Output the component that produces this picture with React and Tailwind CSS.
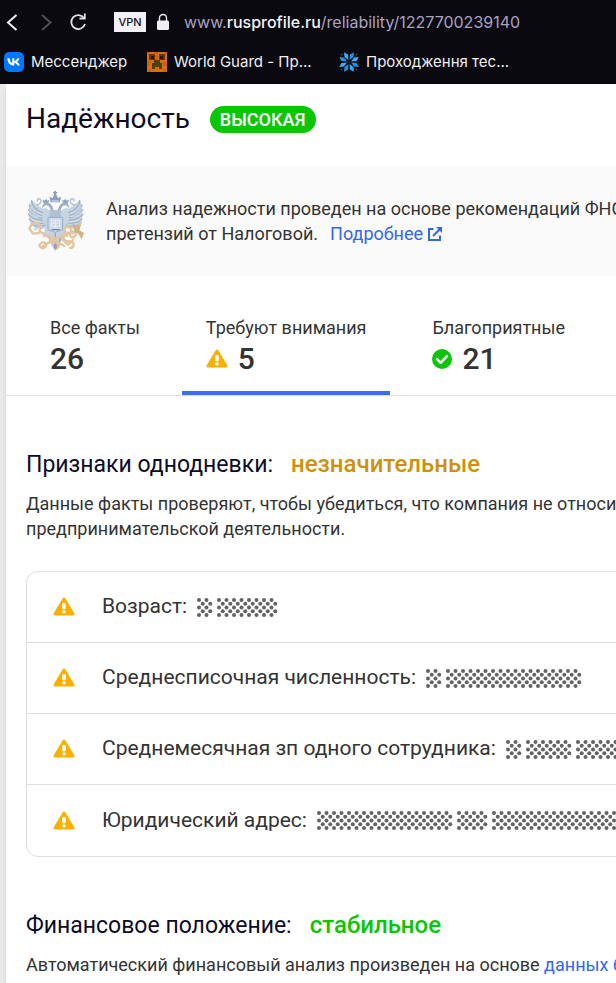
import { useState } from 'react'

const facts = [
  { id: 'age', label: 'Возраст:', words: [2, 8] },
  { id: 'staff', label: 'Среднесписочная численность:', words: [2, 18] },
  { id: 'salary', label: 'Среднемесячная зп одного сотрудника:', words: [2, 6, 8] },
  { id: 'address', label: 'Юридический адрес:', words: [18, 4, 20] },
]

const tabs = [
  { id: 'all', label: 'Все факты', count: 26 },
  { id: 'attention', label: 'Требуют внимания', count: 5, icon: WarningIcon },
  { id: 'good', label: 'Благоприятные', count: 21, icon: CheckIcon },
]

const bookmarks = [
  { id: 'vk', title: 'Мессенджер', icon: VkIcon, width: 'w-24' },
  { id: 'guard', title: 'World Guard - Пр...', icon: PumpkinIcon, width: 'w-[145px]' },
  { id: 'tests', title: 'Проходження тес...', icon: SnowflakeIcon, width: 'w-[145px]' },
]

function WarningIcon() {
  return (
    <svg width="22" height="20" viewBox="0 0 22 20" className="shrink-0" aria-hidden="true">
      <path d="M11 2 L20 17 H2 Z" fill="#f9b000" stroke="#f9b000" strokeWidth="3" strokeLinejoin="round" />
      <rect x="9.2" y="6" width="3.6" height="6.5" rx="1.4" fill="#fff" />
      <rect x="9.2" y="13.5" width="3.6" height="3" rx="1.4" fill="#fff" />
    </svg>
  )
}

function CheckIcon() {
  return (
    <svg width="20" height="20" viewBox="0 0 20 20" className="shrink-0" aria-hidden="true">
      <circle cx="10" cy="10" r="10" fill="#0bc507" />
      <path d="M5 10.2 L8.6 13.8 L15 7.2" fill="none" stroke="#fff" strokeWidth="2.6" strokeLinecap="round" strokeLinejoin="round" />
    </svg>
  )
}

function VkIcon() {
  return (
    <svg width="20" height="20" viewBox="0 0 20 20" className="shrink-0" aria-hidden="true">
      <rect width="20" height="20" rx="5" fill="#0077ff" />
      <path d="M3.4 6.3 H5.7 C5.8 9.4 7.1 10.8 8.2 11 V6.3 H10.3 V9 C11.6 8.8 12.8 7.6 13.3 6.3 H15.4 C15.1 8 13.9 9.3 13 9.9 C13.9 10.4 15.3 11.5 15.9 13.6 H13.6 C13.1 12.2 12 11.1 10.3 10.9 V13.6 H10 C6 13.6 3.5 11 3.4 6.3 Z" fill="#fff" />
    </svg>
  )
}

function PumpkinIcon() {
  return (
    <svg width="20" height="20" viewBox="0 0 20 20" shapeRendering="crispEdges" className="shrink-0" aria-hidden="true">
      <rect width="20" height="20" fill="#d9700f" />
      <path d="M0 0h3v2H0z M7 0h5v2H7z M17 0h3v2h-3z M0 9h3v5H0z M8 3h3v5H8z M16 10h4v4h-4z M1 17h3v3H1z M16 17h3v3h-3z" fill="#c9650c" />
      <path d="M2 2h6v6H2z M12 2h6v6h-6z" fill="#6b3408" />
      <path d="M4 4h3v3H4z M13 4h3v3h-3z" fill="#2e1503" />
      <path d="M7 8h6v3h2v6h-3v-2H8v2H5v-6h2z" fill="#5a3b0b" />
      <path d="M8 10h4v4H8z" fill="#3f4a10" />
    </svg>
  )
}

function SnowflakeIcon() {
  return (
    <svg width="20" height="20" viewBox="-10 -10 20 20" className="shrink-0" aria-hidden="true">
      {[0, 90, 180, 270].map((angle) => (
        <g key={angle} transform={`rotate(${angle})`}>
          <path d="M-0.6 -2 L-4.4 -5 L-5 -9.8 L-0.9 -7.6 Z" fill="#38b0fa" />
          <path d="M0.6 -2 L4.4 -5 L5 -9.8 L0.9 -7.6 Z" fill="#1c93ea" />
          <circle cx="7.5" cy="-7.5" r="1" fill="#1d4c74" />
        </g>
      ))}
      <circle r="1" fill="#17324a" />
    </svg>
  )
}

function ExternalIcon() {
  return (
    <svg width="16" height="16" viewBox="0 0 16 16" fill="none" stroke="#3268f0" strokeWidth="2" aria-hidden="true">
      <path d="M6.5 3 H2 V14 H13 V9.5" />
      <path d="M6 10 L13.5 2.5" />
      <path d="M9 1 H15 V7 Z" fill="#3268f0" stroke="none" />
    </svg>
  )
}

// Double-headed eagle over crossed gold keys
function Emblem() {
  const wing = (
    <>
      <path d="M96 82 C86 70 78 64 66 68 C54 58 40 48 33 41 C26 58 24 82 28 104 C34 124 52 130 68 128 L92 122 Z" fill="#c3d0df" />
      <g fill="none" stroke="#93a9c1" strokeWidth="4" strokeLinecap="round">
        <path d="M34 44 C34 60 44 70 66 80" />
        <path d="M27 57 C30 72 42 80 64 88" />
        <path d="M25 71 C29 84 42 90 64 96" />
        <path d="M25 85 C30 97 44 101 66 104" />
        <path d="M27 99 C34 110 48 112 68 112" />
        <path d="M34 112 C42 122 58 122 74 118" />
      </g>
      <g fill="none" stroke="#e4ebf3" strokeWidth="2" strokeLinecap="round">
        <path d="M30 62 C34 74 44 78 62 84" />
        <path d="M28 78 C34 88 46 92 62 92" />
        <path d="M29 93 C36 104 48 106 66 108" />
      </g>
      <path d="M92 90 C94 72 88 60 80 58 C74 56 70 62 65 66 C67 52 74 46 84 50 C96 54 102 72 101 90 Z" fill="#91a7c0" />
      <path d="M69 50 L66 41 L73 44 L77 38 L81 44 L87 41 L84 50 Z" fill="#7f96b2" />
      <path d="M48 57 C58 56 63 51 62 43 C58 35 49 38 51 46" fill="none" stroke="#a5b6ca" strokeWidth="4" />
    </>
  )
  return (
    <svg viewBox="17 12 186 186" className="size-[62px] shrink-0 opacity-90" role="img" aria-label="Эмблема ФНС">
      {wing}
      <g transform="matrix(-1 0 0 1 212 0)">{wing}</g>
      <path d="M91 49 L87 33 L97 36 L101 26 V21 H98 V18 H102 V14 H107 V18 H111 V21 H108 V26 L113 36 L123 33 L118 49 Z" fill="#7f97b5" />
      <path d="M94 45 H116" stroke="#dce5ef" strokeWidth="3" />
      <path d="M88 72 H122 V96 H88 Z" fill="#a9bbcf" />
      <path d="M78 118 L66 154 L82 152 L93 177 L105 196 L118 177 L129 152 L144 154 L132 118 Z" fill="#c3cfdd" />
      <path d="M87 150 L97 174 M123 150 L113 174 M105 140 V188" stroke="#899fb9" strokeWidth="4" />
      <path d="M83 94 H127 V131 C119 135 111 135 105 140 C99 135 91 135 83 131 Z" fill="#c7d5e6" stroke="#8fa8c4" strokeWidth="3" />
      <path d="M93 102 H118 V122 H93 Z M105 102 V126 M97 111 H114" fill="none" stroke="#e9f0f7" strokeWidth="3" />
      <path d="M94 131 H118" stroke="#627f9f" strokeWidth="4" />
      <g fill="none" stroke="#e0c194" strokeWidth="7" strokeLinecap="round" strokeLinejoin="round">
        <path d="M35 113 L52 111 L62 123 L56 141 L38 143 L27 128 Z" />
        <path d="M60 137 L84 153 L132 180" />
        <path d="M181 112 L164 138 L106 157 L64 184" />
        <circle cx="143" cy="131" r="10" />
        <circle cx="157" cy="145" r="9" />
        <path d="M132 144 C124 160 134 168 151 166 C164 170 162 186 150 186" />
        <path d="M63 171 C76 164 84 180 70 186 C60 188 56 180 58 175" />
        <path d="M97 155 C84 160 88 170 102 170 C120 172 119 188 105 187" />
        <path d="M128 162 L143 176 L158 162" />
      </g>
      <path d="M156 111 L169 121 L182 116 L177 133 L191 141 L184 160 L174 143 L163 139 Z" fill="#ccab79" />
      <path d="M43 122 L52 122 L51 133 H41 Z" fill="#c9d3dc" />
      <path d="M99 178 L105 172 L111 178 L108 190 H102 Z" fill="#9b8db2" />
    </svg>
  )
}

// Hidden values are drawn as a dotted stipple, one block per word
function Stipple({ cells }) {
  const dots = []
  for (let col = 0; col < cells * 2; col++) {
    for (let row = col % 2; row < 5; row += 2) {
      dots.push(<circle key={`${col}-${row}`} cx={2 + col * 3.75} cy={2 + row * 3.75} r="2" />)
    }
  }
  return (
    <svg width={Math.ceil(cells * 7.5)} height="19" fill="#636363" className="shrink-0 overflow-visible" aria-hidden="true">
      {dots}
    </svg>
  )
}

function BrowserBar() {
  return (
    <header className="bg-[#09090f] h-21 overflow-hidden whitespace-nowrap font-[Inter,sans-serif]">
      <div className="flex items-center h-11 pl-1">
        <button type="button" aria-label="Назад" className="w-4">
          <svg width="16" height="20" viewBox="0 0 16 20" fill="none" stroke="#f0eff5" strokeWidth="2">
            <path d="M12.5 3 L4 10.5 L12.5 18" />
          </svg>
        </button>
        <button type="button" aria-label="Вперёд" className="ml-5 w-4">
          <svg width="16" height="20" viewBox="0 0 16 20" fill="none" stroke="#504f57" strokeWidth="2">
            <path d="M2 3 L10.5 10.5 L2 18" />
          </svg>
        </button>
        <button type="button" aria-label="Обновить" className="ml-3 w-5">
          <svg width="20" height="20" viewBox="0 0 20 20" fill="none" stroke="#e3e2e8" strokeWidth="1.8">
            <path d="M16 6 A7 7 0 1 0 17 12" />
            <path d="M16.8 1.5 V6.5 H11.5" />
          </svg>
        </button>
        <span className="ml-[26px] w-8 h-5 flex items-center justify-center bg-[#f3f1f7] text-[11px] font-medium text-[#111118]">VPN</span>
        <svg width="12" height="18" viewBox="0 0 12 18" className="ml-[11px] shrink-0" aria-hidden="true">
          <path d="M2.5 8 V5 A3.5 3.5 0 0 1 9.5 5 V8" fill="none" stroke="#f0eff5" strokeWidth="1.4" />
          <rect y="7.5" width="12" height="9.5" rx="1.5" fill="#f0eff5" />
        </svg>
        <p className="ml-[15px] text-base text-[#aba2c2]">
          www.<span className="font-medium text-[#f5f4fa]">rusprofile.ru</span>/reliability/1227700239140
        </p>
      </div>
      <nav className="flex items-center gap-5 h-9 pl-1 text-[15px] text-[#f0eff5]">
        {bookmarks.map(({ id, title, icon: Icon, width }) => (
          <a key={id} href={`#${id}`} className="flex items-center gap-[7px]">
            <Icon />
            <span className={width}>{title}</span>
          </a>
        ))}
      </nav>
    </header>
  )
}

function SectionTitle({ children, verdict, tone }) {
  return (
    <h2 className="flex items-baseline gap-[18px] text-[23px] leading-7 text-[#0b0b28]">
      {children}
      <span className={`text-[24px] font-medium ${tone}`}>{verdict}</span>
    </h2>
  )
}

export default function App() {
  const [active, setActive] = useState('attention')

  return (
    <div className="bg-[#e9eaec] text-[#333] font-[Roboto,sans-serif] overflow-hidden">
      <BrowserBar />
      <main className="ml-1.5 bg-white shadow-md whitespace-nowrap overflow-hidden">
        <div className="flex items-center gap-5 px-5 pt-5 pb-8">
          <h1 className="text-[28px] leading-[30px] text-[#0b0b28]">Надёжность</h1>
          <span className="rounded-full bg-[#0bc507] px-2.5 text-[18px] leading-[27px] font-medium text-white">ВЫСОКАЯ</span>
        </div>

        <div className="flex items-center gap-[18px] bg-[#fafafa] px-5 py-6">
          <Emblem />
          <p className="text-[18px] leading-[25px]">
            Анализ надежности проведен на основе рекомендаций ФНС
            <br />
            претензий от Налоговой.
            <a href="#details" className="ml-3 inline-flex items-center gap-1 text-[#3268f0]">
              Подробнее
              <ExternalIcon />
            </a>
          </p>
        </div>

        <div role="tablist" className="flex gap-[18px] border-b border-[#dedede] px-5 pt-10">
          {tabs.map(({ id, label, count, icon: Icon }) => (
            <button
              key={id}
              type="button"
              role="tab"
              aria-selected={active === id}
              onClick={() => setActive(id)}
              className={`px-6 pb-[13px] text-left border-b-4 ${active === id ? 'border-[#3a6df0]' : 'border-transparent'}`}
            >
              <span className="block text-[18px] leading-6">{label}</span>
              <span className="flex items-center gap-2.5 text-[30px] leading-[38px] font-medium">
                {Icon && <Icon />}
                {count}
              </span>
            </button>
          ))}
        </div>

        <section className="pl-5 pt-[54px]">
          <SectionTitle verdict="незначительные" tone="text-[#cc920d]">Признаки однодневки:</SectionTitle>
          <p className="mt-3 text-[18px] leading-[25px]">
            Данные факты проверяют, чтобы убедиться, что компания не относится
            <br />
            предпринимательской деятельности.
          </p>
          <ul className="mt-[30px] -mr-4 rounded-xl border border-[#dedede] divide-y divide-[#dedede]">
            {facts.map((fact) => (
              <li key={fact.id} className="flex items-center pl-[26px] h-[71px]">
                <WarningIcon />
                <span className="ml-[27px] mr-[10px] text-[21px]">{fact.label}</span>
                <span className="flex gap-[5px]">
                  {fact.words.map((cells, i) => (
                    <Stipple key={i} cells={cells} />
                  ))}
                </span>
              </li>
            ))}
          </ul>
        </section>

        <section className="pl-5 pt-[54px] pb-2">
          <SectionTitle verdict="стабильное" tone="text-[#0bc507]">Финансовое положение:</SectionTitle>
          <p className="mt-3 text-[18px] leading-[25px]">
            Автоматический финансовый анализ произведен на основе{' '}
            <a href="#reports" className="text-[#3268f0]">данных бухгалтерской</a>
          </p>
        </section>
      </main>
    </div>
  )
}
